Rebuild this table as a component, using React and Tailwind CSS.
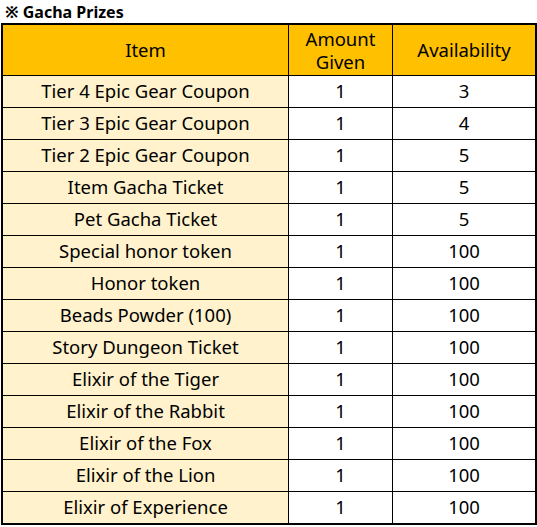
const prizes = [
  ["Tier 4 Epic Gear Coupon", 1, 3],
  ["Tier 3 Epic Gear Coupon", 1, 4],
  ["Tier 2 Epic Gear Coupon", 1, 5],
  ["Item Gacha Ticket", 1, 5],
  ["Pet Gacha Ticket", 1, 5],
  ["Special honor token", 1, 100],
  ["Honor token", 1, 100],
  ["Beads Powder (100)", 1, 100],
  ["Story Dungeon Ticket", 1, 100],
  ["Elixir of the Tiger", 1, 100],
  ["Elixir of the Rabbit", 1, 100],
  ["Elixir of the Fox", 1, 100],
  ["Elixir of the Lion", 1, 100],
  ["Elixir of Experience", 1, 100],
];

export default function App() {
  return (
    <div
      className="w-[537px] h-[527px] bg-white text-black"
      style={{ fontFamily: '"Noto Sans", "Noto Sans CJK KR", sans-serif' }}
    >
      {/* title */}
      <div className="h-[23px] pl-[5px] flex items-center text-[16px] font-bold leading-none">
        ※ Gacha Prizes
      </div>

      {/* table */}
      <div className="ml-[1px] w-[536px] border-2 border-black bg-black grid grid-cols-[285px_103px_142px] gap-px text-[18.5px] leading-[1.2]">
        <div className="h-[50px] bg-[#ffc000] flex items-center justify-center">Item</div>
        <div className="h-[50px] bg-[#ffc000] flex flex-col items-center justify-center leading-[23px]">
          <span>Amount</span>
          <span>Given</span>
        </div>
        <div className="h-[50px] bg-[#ffc000] flex items-center justify-center">Availability</div>

        {prizes.map(([name, amount, avail]) => (
          <div key={name} className="contents">
            <div className="h-[31px] bg-[#fff2cc] flex items-center justify-center">{name}</div>
            <div className="h-[31px] bg-white flex items-center justify-center">{amount}</div>
            <div className="h-[31px] bg-white flex items-center justify-center">{avail}</div>
          </div>
        ))}
      </div>
    </div>
  );
}
